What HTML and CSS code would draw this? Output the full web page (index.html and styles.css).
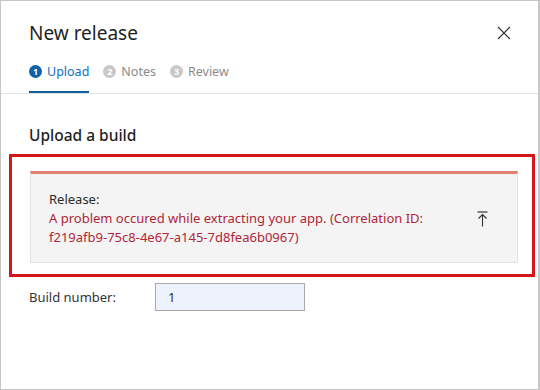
FILE: index.html
```html
<!DOCTYPE html>
<html lang="en">
<head>
    <meta charset="UTF-8">
    <meta name="viewport" content="width=device-width, initial-scale=1.0">
    <title>New release</title>
    <link rel="stylesheet" href="styles.css">
</head>
<body>
    <div class="dialog">
        <!-- Header with steps -->
        <div class="dialog-header">
            <div class="title-row">
                <h1 class="title">New release</h1>
                <button class="close" aria-label="Close">
                    <svg width="14" height="14" viewBox="0 0 14 14">
                        <path d="M1 1 L13 13 M13 1 L1 13" stroke="#333" stroke-width="1.2" fill="none"/>
                    </svg>
                </button>
            </div>
            <div class="steps">
                <div class="step active"><span class="num">1</span>Upload</div>
                <div class="step"><span class="num">2</span>Notes</div>
                <div class="step"><span class="num">3</span>Review</div>
            </div>
        </div>

        <div class="dialog-body">
            <h2 class="section-title">Upload a build</h2>

            <div class="highlight">
                <div class="message">
                    <div class="message-text">
                        <div class="message-label">Release:</div>
                        <div class="message-error">A problem occured while extracting your app. (Correlation ID: f219afb9-75c8-4e67-a145-7d8fea6b0967)</div>
                    </div>
                    <svg class="upload-icon" width="11" height="16" viewBox="0 0 11 16">
                        <path d="M0.5 1 H10.5" stroke="#333" stroke-width="1.2" fill="none"/>
                        <path d="M5.5 3.5 V15.5 M1.5 7.5 L5.5 3.5 L9.5 7.5" stroke="#333" stroke-width="1.1" fill="none"/>
                    </svg>
                </div>
            </div>

            <div class="field">
                <label class="field-label" for="build">Build number:</label>
                <input class="field-input" id="build" type="text" value="1">
            </div>
        </div>
    </div>
</body>
</html>
```

FILE: styles.css
```css
/* Page reset */
body {
    margin: 0;
    background: #ffffff;
    font-family: 'Noto Sans', 'Open Sans', sans-serif;
    color: #222222;
}

/* Dialog frame */
.dialog {
    width: 540px;
    height: 390px;
    box-sizing: border-box;
    border: 1px solid #c6c6c6;
    border-right-width: 2px;
    background: #ffffff;
    overflow: hidden;
}

/* Header */
.dialog-header {
    border-bottom: 1px solid #e3e3e3;
    padding: 0 28px;
}

.title-row {
    display: flex;
    justify-content: space-between;
    align-items: center;
    padding-top: 18px;
}

.title {
    margin: 0;
    font-size: 19px;
    font-weight: 400;
    line-height: 28px;
    color: #1f1f1f;
}

.close {
    border: 0;
    background: none;
    padding: 0;
    margin-right: -1px;
    width: 14px;
    height: 14px;
    display: flex;
}

/* Step tabs */
.steps {
    display: flex;
    gap: 14px;
    margin-top: 10px;
}

.step {
    display: flex;
    align-items: center;
    gap: 5px;
    height: 28px;
    padding-bottom: 6px;
    font-size: 12.5px;
    color: #8a8a8a;
    border-bottom: 2px solid transparent;
}

.step.active {
    color: #106ebe;
    border-bottom-color: #0f5e9c;
}

.num {
    width: 13px;
    height: 13px;
    border-radius: 50%;
    background: #c8c8c8;
    color: #ffffff;
    font-size: 9px;
    font-weight: 700;
    display: flex;
    align-items: center;
    justify-content: center;
}

.step.active .num {
    background: #0f62a8;
}

/* Body */
.dialog-body {
    padding-top: 30px;
}

.section-title {
    margin: 0 28px;
    font-size: 15.5px;
    font-weight: 500;
    line-height: 22px;
    color: #1f1f1f;
}

/* Red annotation box */
.highlight {
    margin: 8px 3px 0 8px;
    border: 3px solid #d8141b;
    padding: 14px 14px 11px 18px;
}

/* Message bar */
.message {
    display: flex;
    align-items: center;
    justify-content: space-between;
    background: #f4f4f4;
    border: 1px solid #e2e2e2;
    border-top: 3px solid #e0826f;
    padding: 16px 29px 15px 18px;
}

.message-text {
    font-size: 13px;
    line-height: 19px;
    width: 390px;
}

.message-label {
    color: #2b2b2b;
}

.message-error {
    color: #b0243a;
}

.upload-icon {
    display: block;
}

/* Build number field */
.field {
    display: flex;
    align-items: center;
    margin: 6px 0 0 28px;
}

.field-label {
    width: 126px;
    font-size: 13px;
    color: #333333;
}

.field-input {
    width: 150px;
    height: 28px;
    box-sizing: border-box;
    border: 1px solid #a8a8a8;
    background: #edf2fc;
    padding: 0 12px;
    font-family: 'Noto Sans', 'Open Sans', sans-serif;
    font-size: 13px;
    color: #333333;
}
```
